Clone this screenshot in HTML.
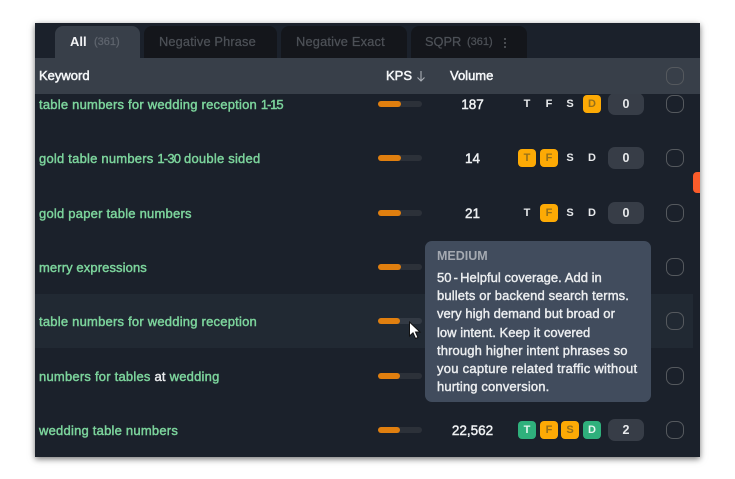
<!DOCTYPE html>
<html><head><meta charset="utf-8"><style>
html,body{margin:0;padding:0;background:#fff;}
body{width:735px;height:479px;position:relative;overflow:hidden;font-family:"Liberation Sans",sans-serif;}
#s{position:absolute;left:35px;top:23px;width:665px;height:434px;box-shadow:0 2px 6px rgba(0,0,0,.55);}
#p{position:absolute;left:35px;top:23px;width:665px;height:434px;background:#1b212b;overflow:hidden;filter:blur(.25px);}
.a{position:absolute;white-space:nowrap;}
.tab{position:absolute;top:3px;height:32px;background:#14161b;border-radius:8px 8px 0 0;}
.tt{position:absolute;top:11px;font-size:12.8px;line-height:16px;color:#4d5157;white-space:nowrap;-webkit-text-stroke:.25px;}
.kw{position:absolute;left:4px;font-size:13px;line-height:16px;color:#7cd49c;white-space:nowrap;letter-spacing:.22px;-webkit-text-stroke:.45px;}
.h{position:absolute;top:45px;font-size:13px;line-height:16px;color:#f4f6f8;-webkit-text-stroke:.5px;white-space:nowrap;}
.bar{position:absolute;left:343px;width:44px;height:6px;border-radius:3px;background:#2c3139;}
.bar i{position:absolute;left:0;top:0;height:6px;width:23px;border-radius:3px;background:#e07f0f;}
.vol{position:absolute;left:390px;width:95px;text-align:center;font-size:13.5px;line-height:16px;color:#eef0f2;-webkit-text-stroke:.45px;}
.b{position:absolute;width:18px;height:18px;border-radius:4px;text-align:center;font-size:11px;line-height:18px;color:#e8eaec;font-weight:bold;}
.y{background:#fdaa05;color:#96701a;}
.g{background:#2fb07c;color:#e4f5ee;}
.c{position:absolute;left:573px;width:36px;height:22px;border-radius:7px;background:#373d47;text-align:center;font-size:12.5px;line-height:22px;color:#e8eaec;font-weight:bold;}
.ck{position:absolute;left:631px;width:16px;height:16px;border:1px solid #55595e;border-radius:7px;}
</style></head><body>
<div id="s"></div>
<div id="p">
<div class="tab" style="left:20px;width:85px;background:#383f49;"></div>
<div class="tt" style="left:35px;color:#f2f3f5;font-weight:bold;font-size:13px;-webkit-text-stroke:0;">All</div>
<div class="tt" style="left:59px;font-size:11px;color:#5f656e;">(361)</div>
<div class="tab" style="left:109px;width:133px;"></div>
<div class="tt" style="left:124px;letter-spacing:.15px;">Negative Phrase</div>
<div class="tab" style="left:246px;width:126px;"></div>
<div class="tt" style="left:261px;letter-spacing:.2px;">Negative Exact</div>
<div class="tab" style="left:376px;width:116px;"></div>
<div class="tt" style="left:390px;">SQPR</div>
<div class="tt" style="left:432px;font-size:11px;">(361)</div>
<svg class="a" style="left:468px;top:14px" width="4" height="12"><circle cx="2" cy="2" r="1" fill="#5a5e63"/><circle cx="2" cy="6" r="1" fill="#5a5e63"/><circle cx="2" cy="10" r="1" fill="#5a5e63"/></svg>

<div class="a" style="left:0;top:271px;width:658px;height:54px;background:#212933;"></div>

<!-- row 1 -->
<div class="kw" style="top:73.5px;">table numbers for wedding reception <span style="letter-spacing:-1.1px">1-15</span></div>
<div class="bar" style="top:78px;"><i></i></div>
<div class="vol" style="top:73.5px;">187</div>
<div class="b" style="left:483px;top:72px;">T</div>
<div class="b" style="left:505px;top:72px;">F</div>
<div class="b" style="left:526px;top:72px;">S</div>
<div class="b y" style="left:548px;top:72px;">D</div>
<div class="c" style="top:70px;">0</div>
<div class="ck" style="top:72px;"></div>

<!-- header above row 1 -->
<div class="a" style="left:0;top:35px;width:665px;height:36px;background:#383f49;"></div>
<div class="h" style="left:4px;">Keyword</div>
<div class="h" style="left:351px;">KPS</div>
<svg class="a" style="left:381px;top:47px" width="10" height="12" fill="none" stroke="#a9aeb5" stroke-width="1.1"><path d="M5 1V11M1.5 7.5L5 11L8.5 7.5"/></svg>
<div class="h" style="left:415px;">Volume</div>
<div class="ck" style="top:44px;"></div>

<!-- row 2 -->
<div class="kw" style="top:127.5px;">gold table numbers <span style="letter-spacing:-.8px">1-30</span> double sided</div>
<div class="bar" style="top:132px;"><i></i></div>
<div class="vol" style="top:127.5px;">14</div>
<div class="b y" style="left:483px;top:126px;">T</div>
<div class="b y" style="left:505px;top:126px;">F</div>
<div class="b" style="left:526px;top:126px;">S</div>
<div class="b" style="left:548px;top:126px;">D</div>
<div class="c" style="top:124px;">0</div>
<div class="ck" style="top:126px;"></div>

<!-- row 3 -->
<div class="kw" style="top:182.5px;">gold paper table numbers</div>
<div class="bar" style="top:187px;"><i></i></div>
<div class="vol" style="top:182.5px;">21</div>
<div class="b" style="left:483px;top:181px;">T</div>
<div class="b y" style="left:505px;top:181px;">F</div>
<div class="b" style="left:526px;top:181px;">S</div>
<div class="b" style="left:548px;top:181px;">D</div>
<div class="c" style="top:179px;">0</div>
<div class="ck" style="top:181px;"></div>

<!-- row 4 -->
<div class="kw" style="top:236.5px;letter-spacing:.1px;">merry expressions</div>
<div class="bar" style="top:241px;"><i></i></div>
<div class="ck" style="top:235px;"></div>

<!-- row 5 -->
<div class="kw" style="top:290.5px;">table numbers for wedding reception</div>
<div class="bar" style="top:295px;background:#333a44;"><i style="width:22px"></i></div>
<div class="ck" style="top:289px;"></div>

<!-- row 6 -->
<div class="kw" style="top:345.5px;">numbers for tables <span style="color:#e8eaec">at</span> wedding</div>
<div class="bar" style="top:350px;"><i style="width:22px"></i></div>
<div class="ck" style="top:344px;"></div>

<!-- row 7 -->
<div class="kw" style="top:399.5px;">wedding table numbers</div>
<div class="bar" style="top:404px;"><i style="width:22px"></i></div>
<div class="vol" style="top:399.5px;">22,562</div>
<div class="b g" style="left:483px;top:398px;">T</div>
<div class="b y" style="left:505px;top:398px;">F</div>
<div class="b y" style="left:526px;top:398px;">S</div>
<div class="b g" style="left:548px;top:398px;">D</div>
<div class="c" style="top:396px;">2</div>
<div class="ck" style="top:398px;"></div>

<!-- scrollbar -->
<div class="a" style="left:658px;top:149px;width:7px;height:21px;background:#fb5c2a;border-radius:4px 0 0 4px;"></div>

<!-- tooltip -->
<div class="a" style="left:390px;top:218px;width:226px;height:161px;background:#414c5d;border-radius:7px;"></div>
<div class="a" style="left:402px;top:225px;font-size:12.5px;line-height:16px;font-weight:bold;color:#a4a9b1;">MEDIUM</div>
<div class="a" style="left:402px;top:246px;font-size:13px;line-height:18.2px;letter-spacing:.03px;color:#eceef0;-webkit-text-stroke:.4px;">50<span style="letter-spacing:-1.5px"> </span>-<span style="letter-spacing:-1.5px"> </span>Helpful coverage. Add in<br><span style="letter-spacing:.13px">bullets or backend search terms.</span><br>very high demand but broad or<br>low intent. Keep it covered<br><span style="letter-spacing:.13px">through higher intent phrases so</span><br><span style="letter-spacing:.26px">you capture related traffic without</span><br><span style="letter-spacing:.13px">hurting conversion.</span></div>

<!-- cursor -->
<svg class="a" style="left:373px;top:298px" width="14" height="20"><path d="M1.5 1V15L5 11.8L7.5 17.5L10 16.5L7.5 11H12Z" fill="#fff" stroke="#111" stroke-width="1"/></svg>
</div>
</body></html>
